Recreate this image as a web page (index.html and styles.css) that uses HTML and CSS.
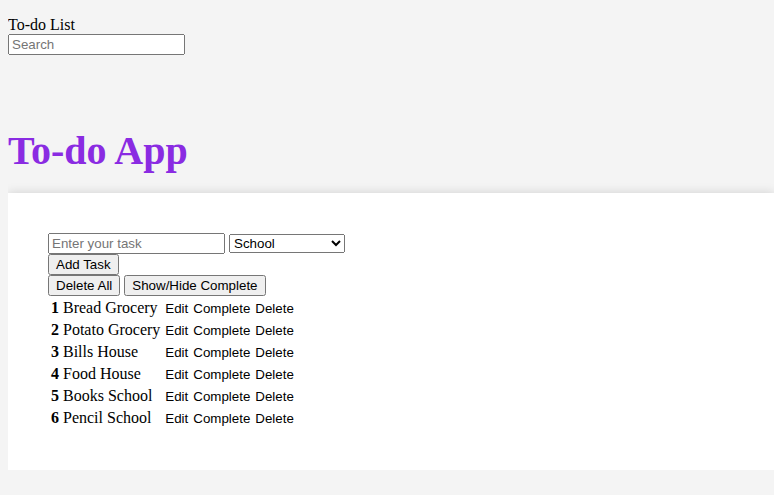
FILE: index.html
```html
<!DOCTYPE html>
<html>
<head>
<meta charset="utf-8">
<title>To-do App</title>
<link rel="stylesheet" href="styles.css">
</head>
<body>
<header class="top">
  <div class="top-title">To-do List</div>
  <input class="search" type="text" placeholder="Search">
</header>
<h1 class="app-title">To-do App</h1>
<main class="card">
  <div class="form-row">
    <input class="task-input" type="text" placeholder="Enter your task">
    <select class="cat-select">
      <option>School</option>
      <option>Grocery</option>
      <option>House</option>
    </select>
  </div>
  <div class="form-row"><button class="btn">Add Task</button></div>
  <div class="form-row"><button class="btn">Delete All</button> <button class="btn">Show/Hide Complete</button></div>
  <table class="tasks">
    <tr><td><b>1</b> Bread Grocery</td><td><button class="act">Edit</button> <button class="act">Complete</button> <button class="act">Delete</button></td></tr>
    <tr><td><b>2</b> Potato Grocery</td><td><button class="act">Edit</button> <button class="act">Complete</button> <button class="act">Delete</button></td></tr>
    <tr><td><b>3</b> Bills House</td><td><button class="act">Edit</button> <button class="act">Complete</button> <button class="act">Delete</button></td></tr>
    <tr><td><b>4</b> Food House</td><td><button class="act">Edit</button> <button class="act">Complete</button> <button class="act">Delete</button></td></tr>
    <tr><td><b>5</b> Books School</td><td><button class="act">Edit</button> <button class="act">Complete</button> <button class="act">Delete</button></td></tr>
    <tr><td><b>6</b> Pencil School</td><td><button class="act">Edit</button> <button class="act">Complete</button> <button class="act">Delete</button></td></tr>
  </table>
</main>
</body>
</html>
```
FILE: styles.css
```css
html, body {
  background: #f4f4f4;
}
body {
  margin: 8px 0 8px 8px;
  font-family: "Liberation Serif", "Times New Roman", serif;
  font-size: 16px;
}
.top {
  padding-top: 8px;
}
.search, .task-input, .cat-select, .btn, .act {
  font-family: "Liberation Sans", Arial, sans-serif;
  font-size: 13.333px;
}
.search::placeholder, .task-input::placeholder {
  color: #757575;
}
.search, .task-input {
  width: 177px;
  height: 21px;
  box-sizing: border-box;
  margin: 0;
}
.app-title {
  color: #8a2be2;
  font-size: 40px;
  font-weight: bold;
  margin: 72px 0 19px;
}
.card {
  display: block;
  background: #fff;
  padding: 40px;
  box-shadow: 0 0 10px rgba(0, 0, 0, 0.15);
}
.form-row {
  line-height: 0;
}
.form-row > * {
  vertical-align: top;
}
.cat-select {
  width: 116px;
  height: 19px;
  margin: 1px 0 0 0;
}
.btn {
  height: 21px;
  margin: 0;
}
.tasks td {
  white-space: nowrap;
}
.act {
  border: none;
  background: none;
  padding: 0 0 0 1px;
  margin: 0;
  color: #000;
}
```
